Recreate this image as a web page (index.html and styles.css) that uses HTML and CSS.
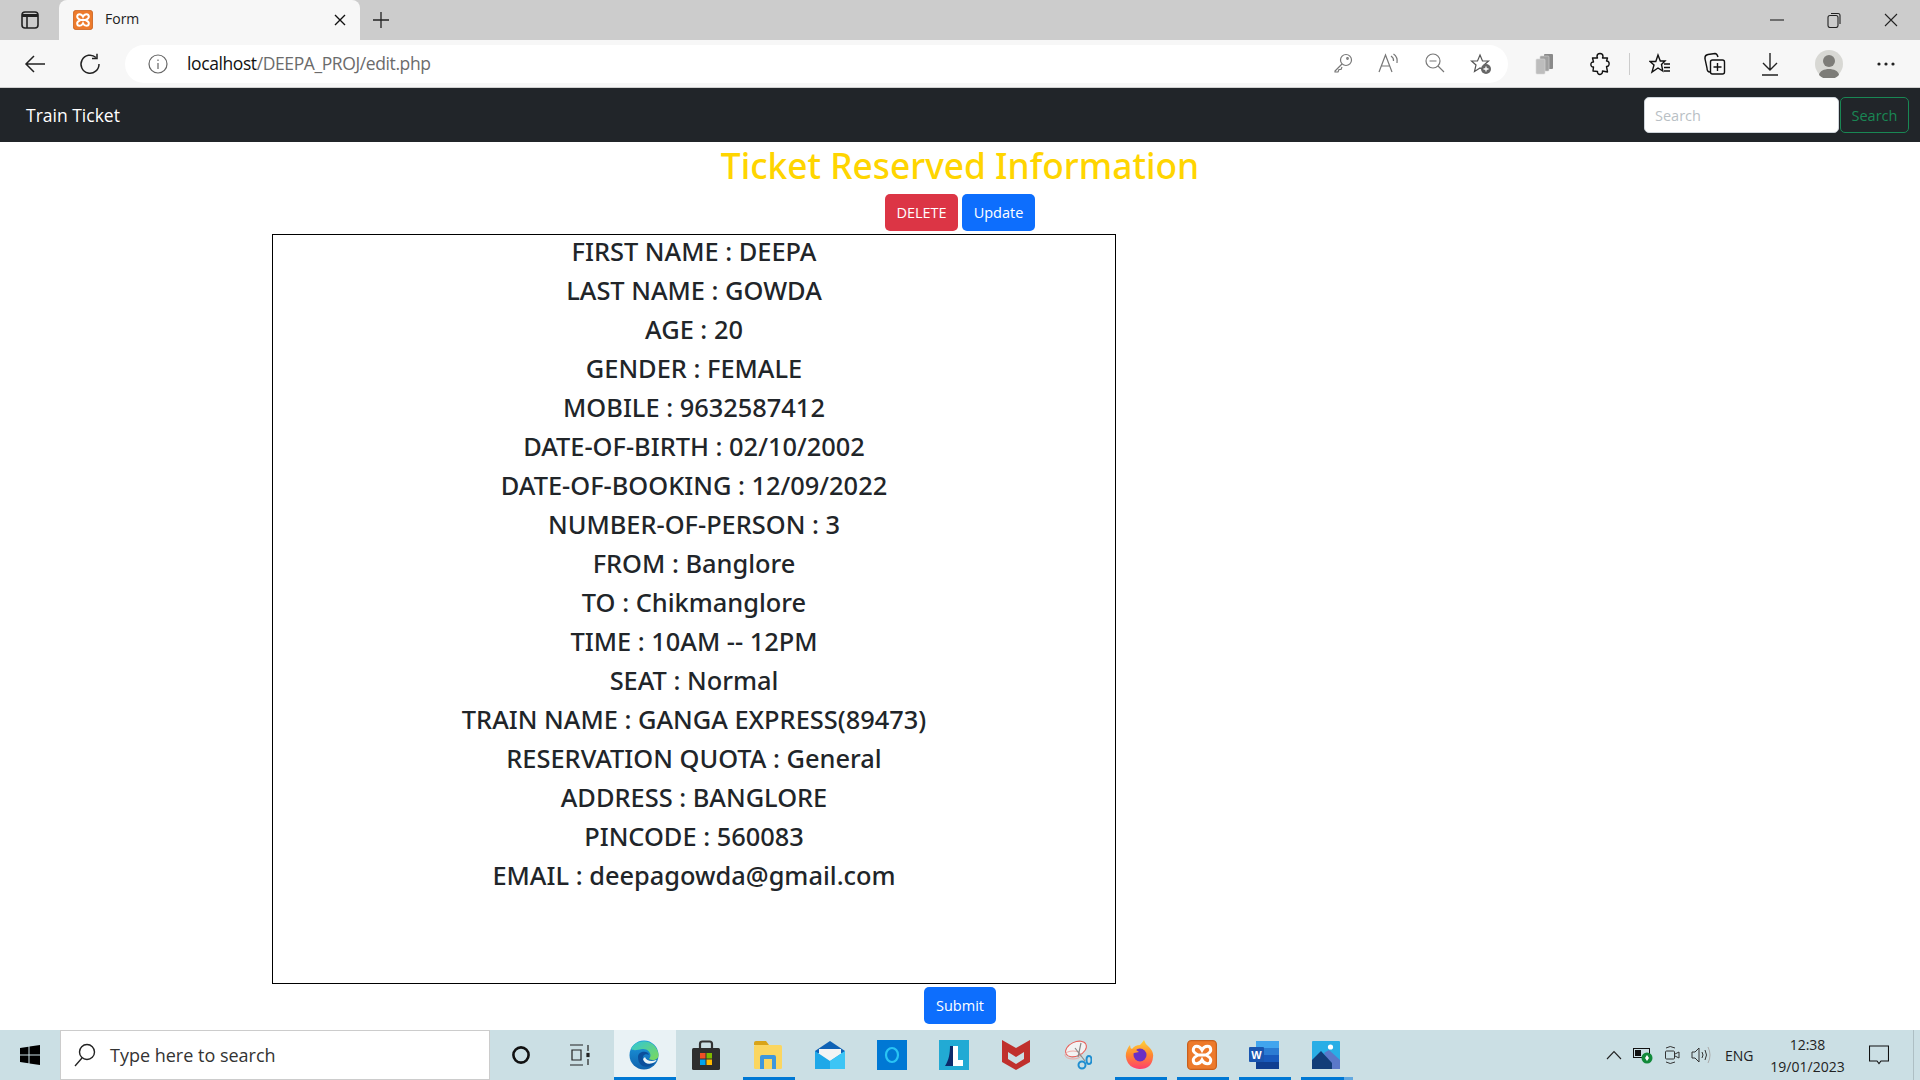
FILE: index.html
```html
<!DOCTYPE html>
<html lang="en">
<head>
    <meta charset="UTF-8">
    <title>Form</title>
    <link rel="stylesheet" href="styles.css">
</head>
<body>
    <svg class="defs" width="0" height="0">
        <defs>
            <linearGradient id="edgeA" x1="0" y1="0" x2="1" y2="1"><stop offset="0" stop-color="#2fc6d8"/><stop offset="1" stop-color="#7ed957"/></linearGradient>
            <linearGradient id="edgeB" x1="0" y1="0" x2="0" y2="1"><stop offset="0" stop-color="#1c9be0"/><stop offset="1" stop-color="#0f62ad"/></linearGradient>
            <linearGradient id="foxA" x1="0" y1="0" x2="0" y2="1"><stop offset="0" stop-color="#ffd43a"/><stop offset="0.5" stop-color="#ff8a2f"/><stop offset="1" stop-color="#ff3f6e"/></linearGradient>
            <symbol id="xampp" viewBox="0 0 24 24">
                <rect x="0.5" y="0.5" width="23" height="23" rx="3" fill="#ed7a2b" stroke="#c9601c"/>
                <path d="M12 8C10 4 5 4 5 8C5 10 7 11 9 12C7 13 5 14 5 16C5 20 10 20 12 16C14 20 19 20 19 16C19 14 17 13 15 12C17 11 19 10 19 8C19 4 14 4 12 8Z M9 12H15" fill="none" stroke="#fff" stroke-width="2.4"/>
            </symbol>
        </defs>
    </svg>

    <div class="tabstrip">
        <div class="strip-btn">
            <svg width="20" height="20" viewBox="0 0 20 20" fill="none" stroke="#222" stroke-width="1.6"><rect x="2" y="2" width="16" height="16" rx="3"/><path d="M2 5.5H18" stroke-width="3"/><path d="M7 6V18"/></svg>
        </div>
        <div class="tab">
            <svg class="tab-icon" width="20" height="20"><use href="#xampp"/></svg>
            <span class="tab-title">Form</span>
            <svg width="12" height="12" viewBox="0 0 12 12" stroke="#111" stroke-width="1.4"><path d="M1 1L11 11M11 1L1 11"/></svg>
        </div>
        <div class="strip-btn new-tab">
            <svg width="18" height="18" viewBox="0 0 18 18" stroke="#222" stroke-width="1.3"><path d="M9 1V17M1 9H17"/></svg>
        </div>
        <div class="win-controls">
            <svg width="14" height="14" viewBox="0 0 14 14" stroke="#222" stroke-width="1.1"><path d="M0 7H14"/></svg>
            <svg width="14" height="16" viewBox="0 0 14 16" fill="none" stroke="#222" stroke-width="1.1"><rect x="1" y="3.5" width="10" height="12" rx="2"/><path d="M4 1.5H11Q13 1.5 13 3.5V12"/></svg>
            <svg width="14" height="14" viewBox="0 0 14 14" stroke="#222" stroke-width="1.1"><path d="M1 1L13 13M13 1L1 13"/></svg>
        </div>
    </div>

    <div class="toolbar">
        <div class="tool nav-tool">
            <svg width="22" height="20" viewBox="0 0 22 20" fill="none" stroke="#222" stroke-width="1.5"><path d="M21 10H2M10 2L2 10L10 18"/></svg>
        </div>
        <div class="tool nav-tool">
            <svg width="22" height="22" viewBox="0 0 22 22" fill="none" stroke="#222" stroke-width="1.5"><path d="M17 4.5A9 9 0 1 0 20 11"/><path d="M18 0.8V5.6H13"/></svg>
        </div>
        <div class="omnibox">
            <svg class="info" width="20" height="20" viewBox="0 0 20 20" fill="none" stroke="#666" stroke-width="1.2"><circle cx="10" cy="10" r="9"/><path d="M10 9V15M10 5.5V7"/></svg>
            <span class="url"><span class="host">localhost</span>/DEEPA_PROJ/edit.php</span>
            <div class="omni-tools">
                <div class="omni-tool"><svg width="20" height="20" viewBox="0 0 20 20" fill="none" stroke="#777" stroke-width="1.2"><circle cx="13" cy="7" r="5.5"/><path d="M9 11L2 18V19H5L6 16.5H8L9 14"/><circle cx="14.5" cy="5.5" r="0.8"/></svg></div>
                <div class="omni-tool"><svg width="22" height="20" viewBox="0 0 22 20" fill="none" stroke="#777" stroke-width="1.2"><path d="M1 19L7.5 2L14 19M3.5 13H11.5"/><path d="M13 3Q16 5 15.5 8M15.5 1Q20 4 19 10"/></svg></div>
                <div class="omni-tool"><svg width="20" height="20" viewBox="0 0 20 20" fill="none" stroke="#777" stroke-width="1.2"><circle cx="8" cy="8" r="7"/><path d="M13 13L19 19M4.5 8H11.5"/></svg></div>
                <div class="omni-tool"><svg width="22" height="22" viewBox="0 0 22 22"><path d="M10 2L12.5 8H18.5L14 12L15 17.5L10 15L4.5 18.5L6 12L1.5 8H7.5Z" fill="none" stroke="#555" stroke-width="1.2"/><circle cx="16" cy="16" r="5" fill="#666"/><path d="M16 13.5V18.5M13.5 16H18.5" stroke="#fff" stroke-width="1.3"/></svg></div>
            </div>
        </div>
        <div class="tool first-tool"><svg width="20" height="22" viewBox="0 0 20 22"><rect x="9" y="1" width="9" height="15" rx="1" fill="#8a8a8a"/><rect x="5" y="3" width="9" height="15" rx="1" fill="#a0a0a0" stroke="#d0d0d0" stroke-width="0.6"/><rect x="1" y="6" width="9" height="15" rx="1" fill="#bdbdbd" stroke="#d8d8d8" stroke-width="0.6"/></svg></div>
        <div class="tool"><svg width="20" height="24" viewBox="0 0 20 24" fill="none" stroke="#111" stroke-width="1.4" stroke-linejoin="round"><path d="M7 4.5C7 0.5 13 0.5 13 4.5L12.5 6H17.5L16.5 9C20 8.5 20 15 16.5 14.5L17.5 20L12.5 19C13 23.5 7 23.5 7.5 19.5L3 19L3.5 15C0 15.5 0 9.5 3.5 10L2.5 6L7.5 6Z"/></svg></div>
        <div class="tool-divider"></div>
        <div class="tool"><svg width="22" height="22" viewBox="0 0 22 22" fill="none" stroke="#111" stroke-width="1.4"><path d="M9 2L11.3 8H16L12.5 11.5L13.8 18L9 15L3 19L5 12L1 8.5H6.8Z"/><path d="M15 11H21M15 14.5H21M15 18H21"/></svg></div>
        <div class="tool"><svg width="22" height="24" viewBox="0 0 22 24" fill="none" stroke="#111" stroke-width="1.4"><path d="M6 20Q3 20 3 16L1 7Q0.5 3 4 2.5L11 1.5Q13 1.5 14 5"/><rect x="6.5" y="8" width="14" height="14" rx="2"/><path d="M13.5 11V19M9.5 15H17.5"/></svg></div>
        <div class="tool"><svg width="18" height="24" viewBox="0 0 18 24" fill="none" stroke="#222" stroke-width="1.4"><path d="M9 1V18M2 11L9 18L16 11M1 23H17"/></svg></div>
        <div class="tool wide-tool avatar-tool"><svg width="28" height="28" viewBox="0 0 28 28"><circle cx="14" cy="14" r="14" fill="#d8d8d4"/><circle cx="14" cy="11" r="6" fill="#7d7c78"/><path d="M4 25C5 17 23 17 24 25A14 14 0 0 1 4 25Z" fill="#7d7c78"/></svg></div>
        <div class="tool wide-tool"><svg width="18" height="4" viewBox="0 0 18 4" fill="#222"><circle cx="2" cy="2" r="1.6"/><circle cx="9" cy="2" r="1.6"/><circle cx="16" cy="2" r="1.6"/></svg></div>
    </div>

    <nav class="navbar">
        <a class="brand">Train Ticket</a>
        <form class="nav-search">
            <input class="search-input" type="text" placeholder="Search">
            <button class="search-btn" type="button">Search</button>
        </form>
    </nav>

    <main class="page">
        <h1 class="title">Ticket Reserved Information</h1>
        <div class="actions">
            <button class="btn btn-danger" type="button">DELETE</button>
            <button class="btn btn-primary" type="button">Update</button>
        </div>
        <div class="details">
            <h4>FIRST NAME : DEEPA</h4>
            <h4>LAST NAME : GOWDA</h4>
            <h4>AGE : 20</h4>
            <h4>GENDER : FEMALE</h4>
            <h4>MOBILE : 9632587412</h4>
            <h4>DATE-OF-BIRTH : 02/10/2002</h4>
            <h4>DATE-OF-BOOKING : 12/09/2022</h4>
            <h4>NUMBER-OF-PERSON : 3</h4>
            <h4>FROM : Banglore</h4>
            <h4>TO : Chikmanglore</h4>
            <h4>TIME : 10AM -- 12PM</h4>
            <h4>SEAT : Normal</h4>
            <h4>TRAIN NAME : GANGA EXPRESS(89473)</h4>
            <h4>RESERVATION QUOTA : General</h4>
            <h4>ADDRESS : BANGLORE</h4>
            <h4>PINCODE : 560083</h4>
            <h4>EMAIL : deepagowda@gmail.com</h4>
        </div>
        <div class="submit-row">
            <button class="btn btn-primary btn-submit" type="button">Submit</button>
        </div>
    </main>

    <footer class="taskbar">
        <div class="start">
            <svg width="20" height="20" viewBox="0 0 20 20" fill="#000"><path d="M0 3L8.5 1.8V9.5H0ZM9.5 1.6L20 0V9.5H9.5ZM0 10.5H8.5V18.2L0 17ZM9.5 10.5H20V20L9.5 18.4Z"/></svg>
        </div>
        <div class="task-search">
            <svg width="22" height="24" viewBox="0 0 22 24" fill="none" stroke="#222" stroke-width="1.4"><circle cx="13" cy="9" r="7.5"/><path d="M8 15L1 23"/></svg>
            <span>Type here to search</span>
        </div>
        <div class="task-util">
            <svg width="20" height="20" viewBox="0 0 20 20" fill="none" stroke="#111" stroke-width="2.6"><circle cx="10" cy="10" r="7.6"/></svg>
        </div>
        <div class="task-util task-view">
            <svg width="22" height="22" viewBox="0 0 22 22" fill="none" stroke="#222" stroke-width="1.2"><path d="M1 1H14M1 21H14M3 6H12V16H3ZM19 1V7M19 15V21"/><rect x="18" y="9.5" width="2" height="3" fill="#222"/></svg>
        </div>
        <div class="task-apps">
            <div class="app running active">
                <svg width="30" height="30" viewBox="0 0 30 30"><circle cx="15" cy="15" r="14.5" fill="url(#edgeB)"/><path d="M2 9C6 -1 26 -3 29.5 14C30 20 24 21 20 19C24 14 19 8 13 9C8 10 5 11 2 9Z" fill="url(#edgeA)"/><path d="M9 17C9 11 19 10 20 15C17 13 13 15 14 19C15 24 21 25 26 22C22 29 9 29 9 17Z" fill="#0b4f9c"/><path d="M14 19C15 24 21 25 26 22C27 21 28 20 27 20C23 22 17 21 16 17Z" fill="#eaf3f6"/></svg>
            </div>
            <div class="app">
                <svg width="30" height="30" viewBox="0 0 30 30"><path d="M9 9V4Q9 1.5 11.5 1.5H18.5Q21 1.5 21 4V9" fill="none" stroke="#333" stroke-width="2.2"/><rect x="1" y="8" width="28" height="22" rx="1.5" fill="#2e2e2e"/><rect x="9" y="13" width="5.5" height="5.5" fill="#ef4f26"/><rect x="15.5" y="13" width="5.5" height="5.5" fill="#7eb900"/><rect x="9" y="19.5" width="5.5" height="5.5" fill="#00a3ee"/><rect x="15.5" y="19.5" width="5.5" height="5.5" fill="#ffb900"/></svg>
            </div>
            <div class="app running">
                <svg width="28" height="30" viewBox="0 0 28 30"><path d="M0 3Q0 1 2 1H12L15 5H0Z" fill="#d9a418"/><rect x="0" y="5" width="28" height="24" rx="1.5" fill="#fbd660"/><path d="M6 29V17Q6 15 8 15H20Q22 15 22 17V29H18V19H10V29Z" fill="#3f97dc"/></svg>
            </div>
            <div class="app">
                <svg width="30" height="28" viewBox="0 0 30 28"><path d="M0 10L15 0L30 10V12H0Z" fill="#0f62b5"/><path d="M4 8H26V16L15 21L4 16Z" fill="#f4f4f4"/><path d="M0 10L15 20L30 10V28H0Z" fill="#1fa8e8"/><path d="M30 10V28H15L15 20Z" fill="#3dc5f5"/></svg>
            </div>
            <div class="app">
                <svg width="30" height="30" viewBox="0 0 30 30"><rect width="30" height="30" fill="#0078d4"/><ellipse cx="15" cy="15" rx="6" ry="7" fill="none" stroke="#29c4f4" stroke-width="2.2"/></svg>
            </div>
            <div class="app">
                <svg width="30" height="30" viewBox="0 0 30 30"><rect width="30" height="30" fill="#22aad4"/><path d="M6 26C10 20 11 13 11 6H14V26Z" fill="#0c2a6b"/><path d="M14 6H19V20H24V26H14Z" fill="#fff"/></svg>
            </div>
            <div class="app">
                <svg width="28" height="30" viewBox="0 0 28 30"><path d="M0 0L14 8L28 0V22L14 30L0 22Z" fill="#c0302c"/><path d="M6 12L14 17L22 12V19L14 24L6 19Z" fill="#cbdfe4"/></svg>
            </div>
            <div class="app">
                <svg width="28" height="30" viewBox="0 0 28 30" fill="none"><ellipse cx="12" cy="9" rx="11" ry="7" transform="rotate(-25 12 9)" fill="#f3f3f3" stroke="#e8605a"/><ellipse cx="9" cy="15" rx="8" ry="4" fill="none" stroke="#eeaaa5"/><path d="M11 8L21 21M17 3L14 17" stroke="#888" stroke-width="1.2"/><circle cx="18" cy="25" r="3.5" stroke="#1f8ed0" stroke-width="2"/><ellipse cx="25" cy="20" rx="2.5" ry="4" stroke="#1f8ed0" stroke-width="2"/></svg>
            </div>
            <div class="app running">
                <svg width="30" height="30" viewBox="0 0 30 30"><path d="M15 29A13.5 13.5 0 0 1 2 10Q3 7 5 5Q5 8 7 9Q10 5 15 5Q17 3 19 0Q20 4 24 7Q29 12 28 17Q27 29 15 29Z" fill="url(#foxA)"/><circle cx="15" cy="15" r="6.5" fill="#6b2fc4"/><path d="M4 10Q10 8 14 12L9 13Q6 13 4 10Z" fill="#ff9a2f"/></svg>
            </div>
            <div class="app running">
                <svg width="30" height="30"><use href="#xampp"/></svg>
            </div>
            <div class="app running">
                <svg width="30" height="30" viewBox="0 0 30 30"><rect x="7" y="1" width="23" height="7" fill="#41a5ee"/><rect x="7" y="8" width="23" height="7" fill="#2b7cd3"/><rect x="7" y="15" width="23" height="7" fill="#185abd"/><rect x="7" y="22" width="23" height="7" fill="#103f91"/><rect x="0" y="7" width="15" height="15" rx="1" fill="#1a56b0"/><text class="word-w" x="7.5" y="19" text-anchor="middle">W</text></svg>
            </div>
            <div class="app running stacked">
                <svg width="28" height="28" viewBox="0 0 28 28"><rect width="28" height="28" rx="1" fill="#29aee6"/><circle cx="18.5" cy="6" r="2.6" fill="#fff"/><path d="M12 12L17 9L28 19V28H20Z" fill="#5b78c9"/><path d="M0 28V19L9 10L20 22V28Z" fill="#123d78"/></svg>
            </div>
        </div>
        <div class="tray">
            <svg class="tray-chevron" width="16" height="10" viewBox="0 0 16 10" fill="none" stroke="#222" stroke-width="1.1"><path d="M1 9L8 1.5L15 9"/></svg>
            <svg class="tray-icon" width="20" height="18" viewBox="0 0 20 18"><rect x="0.5" y="2.5" width="16" height="9" fill="none" stroke="#111"/><rect x="2" y="4" width="6" height="6" fill="#111"/><circle cx="14" cy="12" r="5.5" fill="#128a3a"/><path d="M14 9L16 12L14 15L12 12Z" fill="#fff"/></svg>
            <svg class="tray-icon" width="16" height="20" viewBox="0 0 16 20" fill="none" stroke="#333"><path d="M2 3Q6 0 11 3M2 17Q6 20 11 17"/><rect x="1.5" y="6" width="9" height="8" rx="1"/><path d="M11 9L15 7V13L11 11"/></svg>
            <svg class="tray-icon" width="20" height="18" viewBox="0 0 20 18" fill="none" stroke="#333"><path d="M1 6H4L8 2V16L4 12H1Z"/><path d="M11 6Q13 9 11 12M14 4Q17 9 14 14"/><path d="M17 1Q21 9 17 17" stroke="#aaa"/></svg>
            <span class="tray-lang">ENG</span>
            <div class="clock">
                <span>12:38</span>
                <span>19/01/2023</span>
            </div>
            <svg class="tray-notify" width="20" height="20" viewBox="0 0 20 20" fill="none" stroke="#111" stroke-width="1.1"><path d="M0.5 1H19.5V16H12L10 18.5L8 16H0.5Z"/></svg>
        </div>
    </footer>
</body>
</html>
```

FILE: styles.css
```css
* {
    margin: 0;
    padding: 0;
    box-sizing: border-box;
}
html, body {
    width: 100%;
    height: 100%;
    overflow: hidden;
}
body {
    font-family: "Open Sans", "Noto Sans", sans-serif;
    background-color: #fff;
    color: #212529;
    display: flex;
    flex-direction: column;
}
.defs {
    position: absolute;
}
svg {
    display: block;
    flex-shrink: 0;
}

/* browser chrome */
.tabstrip {
    height: 40px;
    background-color: #ccc;
    display: flex;
    align-items: flex-end;
}
.strip-btn {
    width: 59px;
    height: 40px;
    display: flex;
    align-items: center;
    justify-content: center;
}
.new-tab {
    width: 42px;
}
.tab {
    width: 301px;
    height: 40px;
    background-color: #f7f7f7;
    border-radius: 8px 8px 0 0;
    display: flex;
    align-items: center;
    padding: 0 14px;
}
.tab-icon {
    margin-right: 12px;
}
.tab-title {
    flex: 1;
    font-size: 14px;
    line-height: 18px;
    padding-bottom: 2px;
    color: #222;
}
.win-controls {
    margin-left: auto;
    height: 40px;
    display: flex;
    align-items: center;
    gap: 43px;
    padding-right: 22px;
}
.toolbar {
    height: 48px;
    background-color: #f7f7f7;
    border-bottom: 1px solid #d0d0d0;
    display: flex;
    align-items: center;
    padding-left: 12px;
}
.tool {
    width: 55px;
    height: 38px;
    display: flex;
    align-items: center;
    justify-content: center;
}
.nav-tool {
    width: 46px;
    margin-right: 9px;
}
.wide-tool {
    width: 57px;
}
.avatar-tool {
    margin-left: 3px;
}
.first-tool {
    margin-left: 9px;
}
.tool-divider {
    width: 1px;
    height: 22px;
    background-color: #ccc;
    margin: 0 2px;
}
.omnibox {
    width: 1383px;
    height: 38px;
    background-color: #fff;
    border-radius: 19px;
    display: flex;
    align-items: center;
    padding-left: 23px;
    margin-left: 3px;
}
.url {
    margin-left: 19px;
    font-size: 17.5px;
    line-height: 22px;
    padding-bottom: 1px;
    color: #6b6b6b;
    letter-spacing: -0.4px;
}
.host {
    color: #111;
}
.omni-tools {
    margin-left: auto;
    display: flex;
    padding-right: 4px;
}
.omni-tool {
    width: 46px;
    display: flex;
    justify-content: center;
}

/* navbar */
.navbar {
    height: 54px;
    background-color: #212529;
    display: flex;
    align-items: center;
    justify-content: space-between;
    padding: 0 11px 0 26px;
}
.brand {
    font-size: 17.5px;
    color: #fff;
}
.nav-search {
    display: flex;
    gap: 1px;
}
.search-input {
    width: 195px;
    height: 36px;
    border: 1px solid #ced4da;
    border-radius: 5px;
    padding: 0 10px;
    font-family: inherit;
    font-size: 14.5px;
}
.search-input::placeholder {
    color: #b9bfc5;
}
.search-btn {
    width: 69px;
    height: 36px;
    background: transparent;
    border: 1px solid #198754;
    border-radius: 5px;
    color: #198754;
    font-family: inherit;
    font-size: 14.5px;
}

/* page */
.page {
    flex: 1;
    min-height: 0;
    display: flex;
    flex-direction: column;
}
.title {
    height: 51px;
    line-height: 47px;
    text-align: center;
    font-family: "Noto Sans", sans-serif;
    font-size: 35.3px;
    font-weight: 500;
    color: #ffd500;
}
.actions {
    display: flex;
    justify-content: center;
    gap: 4px;
    margin-top: 1px;
}
.btn {
    width: 73px;
    height: 37px;
    border: none;
    border-radius: 5px;
    color: #fff;
    font-family: inherit;
    font-size: 14.5px;
}
.btn-danger {
    background-color: #dc3545;
}
.btn-primary {
    background-color: #0d6efd;
}
.details {
    width: 844px;
    height: 750px;
    margin: 3px 0 0 272px;
    border: 1px solid #000;
    text-align: center;
}
.details h4 {
    font-family: "Noto Sans", sans-serif;
    font-size: 25.4px;
    font-weight: 500;
    line-height: 32px;
    margin-bottom: 7px;
}
.submit-row {
    display: flex;
    justify-content: center;
    margin-top: 3px;
}
.btn-submit {
    width: 72px;
}

/* windows taskbar */
.taskbar {
    height: 50px;
    background-color: #cbdfe4;
    display: flex;
    align-items: stretch;
}
.start {
    width: 60px;
    display: flex;
    align-items: center;
    justify-content: center;
}
.task-search {
    width: 430px;
    background-color: #fff;
    border: 1px solid #ccc;
    display: flex;
    align-items: center;
    gap: 14px;
    padding-left: 13px;
    font-size: 18px;
    color: #333;
}
.task-util {
    width: 61px;
    display: flex;
    align-items: center;
    justify-content: center;
}
.task-view {
    width: 58px;
}
.task-apps {
    display: flex;
    margin-left: 5px;
}
.app {
    width: 62px;
    display: flex;
    align-items: center;
    justify-content: center;
    border-bottom: 3px solid transparent;
    padding: 3px 2px 0 0;
}
.app.running {
    border-bottom-color: #0078d4;
    margin: 0 5px;
    width: 52px;
}
.app.active {
    background-color: #e9f2f5;
    margin: 0;
    width: 62px;
}
.app.stacked {
    border-image: linear-gradient(to right, #0078d4 0 41px, #62a8e0 41px) 3;
}
.word-w {
    fill: #fff;
    font-family: "Liberation Sans", sans-serif;
    font-size: 11px;
    font-weight: 700;
}
.tray {
    margin-left: auto;
    display: flex;
    align-items: center;
    border-right: 1px solid #aebfc4;
    width: 316px;
    margin-right: 6px;
}
.tray-chevron {
    margin-left: 8px;
}
.tray-icon {
    margin-left: 11px;
}
.tray-lang {
    font-size: 14px;
    color: #222;
    margin-left: 14px;
}
.clock {
    display: flex;
    flex-direction: column;
    align-items: center;
    gap: 3px;
    font-size: 14px;
    color: #222;
    width: 90px;
    margin-left: 9px;
}
.tray-notify {
    margin-left: 16px;
}
```
